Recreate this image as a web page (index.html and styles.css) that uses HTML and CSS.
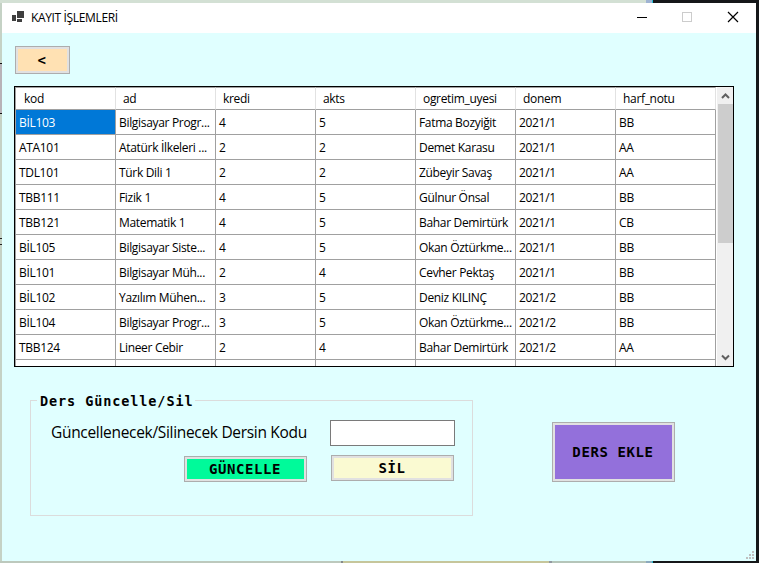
FILE: index.html
```
<!DOCTYPE html>
<html lang="tr">
<head>
<meta charset="utf-8">
<title>KAYIT İŞLEMLERİ</title>
<link rel="stylesheet" href="styles.css">
</head>
<body>
<div class="top-strip"></div>
<div class="bottom-strip"></div>
<div class="behind-box"></div>
<div class="behind-mark"></div>
<main class="window">
  <header class="titlebar">
    <svg class="app-icon" width="12" height="11" viewBox="0 0 12 11" fill="#3f3f3f" shape-rendering="crispEdges"><path d="M5 0h7v7H5zM0 4h4v6H0zM5 8h5v3H5z"/></svg>
    <span class="title">KAYIT İŞLEMLERİ</span>
    <svg class="controls" width="102" height="12" viewBox="0 0 102 12" fill="none" shape-rendering="crispEdges"><path d="M0 6.500h10" stroke="#000"/><path d="M45.500 1.500h9v9h-9z" stroke="#ccc"/><path d="M91 1l10 10M101 1L91 11" stroke="#000" stroke-width="1.200" shape-rendering="auto"/></svg>
  </header>
  <button class="btn back">&lt;</button>
  <section class="grid">
    <table>
      <thead><tr><th>kod</th><th>ad</th><th>kredi</th><th>akts</th><th>ogretim_uyesi</th><th>donem</th><th>harf_notu</th></tr></thead>
      <tbody>
        <tr><td class="selected">BİL103</td><td>Bilgisayar Progr...</td><td>4</td><td>5</td><td>Fatma Bozyiğit</td><td>2021/1</td><td>BB</td></tr>
        <tr><td>ATA101</td><td>Atatürk İlkeleri ...</td><td>2</td><td>2</td><td>Demet Karasu</td><td>2021/1</td><td>AA</td></tr>
        <tr><td>TDL101</td><td>Türk Dili 1</td><td>2</td><td>2</td><td>Zübeyir Savaş</td><td>2021/1</td><td>AA</td></tr>
        <tr><td>TBB111</td><td>Fizik 1</td><td>4</td><td>5</td><td>Gülnur Önsal</td><td>2021/1</td><td>BB</td></tr>
        <tr><td>TBB121</td><td>Matematik 1</td><td>4</td><td>5</td><td>Bahar Demirtürk</td><td>2021/1</td><td>CB</td></tr>
        <tr><td>BİL105</td><td>Bilgisayar Siste...</td><td>4</td><td>5</td><td>Okan Öztürkme...</td><td>2021/1</td><td>BB</td></tr>
        <tr><td>BİL101</td><td>Bilgisayar Müh...</td><td>2</td><td>4</td><td>Cevher Pektaş</td><td>2021/1</td><td>BB</td></tr>
        <tr><td>BİL102</td><td>Yazılım Mühen...</td><td>3</td><td>5</td><td>Deniz KILINÇ</td><td>2021/2</td><td>BB</td></tr>
        <tr><td>BİL104</td><td>Bilgisayar Progr...</td><td>3</td><td>5</td><td>Okan Öztürkme...</td><td>2021/2</td><td>BB</td></tr>
        <tr><td>TBB124</td><td>Lineer Cebir</td><td>2</td><td>4</td><td>Bahar Demirtürk</td><td>2021/2</td><td>AA</td></tr>
        <tr><td></td><td></td><td></td><td></td><td></td><td></td><td></td></tr>
      </tbody>
    </table>
    <div class="scrollbar">
      <svg width="15" height="17" viewBox="0 0 15 17"><path d="M4 11L7.500 7.500l3.500 3.500" fill="none" stroke="#606060" stroke-width="2"/></svg>
      <div class="thumb"></div>
      <svg class="down" width="15" height="17" viewBox="0 0 15 17"><path d="M4 6.500L7.500 10 11 6.500" fill="none" stroke="#606060" stroke-width="2"/></svg>
    </div>
  </section>
  <div class="lower">
    <fieldset class="group">
      <legend>Ders Güncelle/Sil</legend>
      <div class="field"><label for="code">Güncellenecek/Silinecek Dersin Kodu</label><input id="code" type="text"></div>
      <div class="actions"><button class="btn update">GÜNCELLE</button><button class="btn delete">SİL</button></div>
    </fieldset>
    <button class="btn add">DERS EKLE</button>
  </div>
  <svg class="grip" width="8" height="8" viewBox="0 0 8 8" fill="#bfbfbf"><path d="M6 0h2v2H6zM3 3h2v2H3zM6 3h2v2H6zM0 6h2v2H0zM3 6h2v2H3zM6 6h2v2H6z"/></svg>
</main>
</body>
</html>
```
FILE: styles.css
```
* { box-sizing: border-box; }
body {
  margin: 0;
  width: 759px;
  height: 563px;
  padding: 3px 3px 2px 2px;
  position: relative;
  overflow: hidden;
  background: linear-gradient(90deg, #c5d2c5 0 2px, #151719 2px);
  font-family: "Open Sans", "Noto Sans", sans-serif;
  color: #000;
}
.top-strip, .bottom-strip { position: absolute; left: 0; width: 100%; }
.top-strip {
  top: 0;
  height: 3px;
  background: linear-gradient(90deg, #d3e0d4 0 646px, #9fb3d2 646px 652px, #25bdd4 652px 653px, #151719 653px);
}
.bottom-strip {
  bottom: 0;
  height: 2px;
  background: linear-gradient(90deg, #bdc9bd 0 341px, #85898a 341px 343px, #c6c69b 343px 549px, #9298a0 549px 552px, #b5c5b9 552px 646px, #8ba9bd 646px 652px, #28b6c8 652px 653px, #151719 653px);
}
.behind-box {
  position: absolute;
  left: 0;
  top: 63px;
  width: 2px;
  height: 51px;
  background: #b8b3b8;
  border: solid #111;
  border-width: 1px 0;
}
.behind-mark {
  position: absolute;
  left: 0;
  top: 238px;
  width: 2px;
  height: 7px;
  border: solid #222;
  border-width: 1px 0;
}
.window {
  position: relative;
  width: 754px;
  height: 558px;
  background: #e0ffff;
}
.titlebar {
  height: 30px;
  display: flex;
  align-items: center;
  padding: 0 17px 0 10px;
  background: #fff;
}
.app-icon { margin-top: -3px; }
.title {
  margin-left: 7px;
  font-size: 12px;
  line-height: 16px;
  letter-spacing: -0.35px;
  white-space: nowrap;
}
.controls { margin-left: auto; margin-top: -2px; }
.btn {
  display: block;
  padding: 0 1px 0 0;
  border: 1px solid #adadad;
  box-shadow: inset 0 0 0 2px #e1e1e1;
  border-radius: 0;
  color: #000;
  font: bold 14px/16px "DejaVu Sans Mono", monospace;
  letter-spacing: 0.6px;
}
.back { width: 55px; height: 28px; margin: 13px 0 0 13px; background: #ffe1b3; }
.grid {
  display: flex;
  width: 720px;
  height: 281px;
  margin: 12px 0 0 12px;
  border: 1px solid #000;
  background: #fff;
  overflow: hidden;
}
table {
  width: 701px;
  flex: none;
  align-self: flex-start;
  table-layout: fixed;
  border-collapse: separate;
  border-spacing: 0;
  font-size: 12px;
  line-height: 16px;
  letter-spacing: -0.32px;
}
th, td { text-align: left; white-space: nowrap; overflow: hidden; border: solid #a0a0a0; border-width: 0 1px 1px 0; }
th:first-child, td:first-child { width: 101px; border-left-width: 1px; }
th {
  height: 23px;
  padding: 1px 0 0 7px;
  font-weight: normal;
  border-top: 1px solid #a0a0a0;
  border-right-color: #e2e2e2;
}
th:first-child { padding-left: 8px; letter-spacing: -0.2px; }
td { height: 25px; padding: 2px 0 0 3px; }
.selected { background: #0078d7; color: #fff; }
.scrollbar { width: 17px; height: 279px; display: flex; flex-direction: column; align-items: center; background: #f0f0f0; border-left: 1px solid #fff; }
.scrollbar svg { flex: none; }
.thumb { width: 15px; height: 139px; background: #cdcdcd; }
.down { margin-top: auto; }
.lower { display: flex; }
.group {
  width: 443px;
  height: 124px;
  min-width: 0;
  margin: 25px 0 0 28px;
  padding: 0;
  border: 1px solid #dcdcdc;
}
legend {
  margin-left: 6px;
  padding: 0 2px 0 3px;
  height: 17px;
  font: bold 13.5px/19px "DejaVu Sans Mono", monospace;
  letter-spacing: 0.9px;
}
.field { display: flex; align-items: center; margin-top: 11px; padding-left: 20px; }
label { width: 279px; margin-top: -3px; font-size: 15.5px; line-height: 22px; letter-spacing: -0.31px; white-space: nowrap; }
input { width: 125px; height: 26px; padding: 2px; border: 1px solid #7a7a7a; border-radius: 0; background: #fff; }
.actions { display: flex; gap: 24px; margin: 9px 0 0 153px; }
.update { width: 123px; height: 26px; margin-top: 1px; background: #00fa9a; }
.delete { width: 123px; height: 26px; background: #fafad2; }
.add { width: 123px; height: 60px; margin: 55px 0 0 79px; background: #9370db; }
.grip { position: absolute; right: 2px; bottom: 2px; }
```
